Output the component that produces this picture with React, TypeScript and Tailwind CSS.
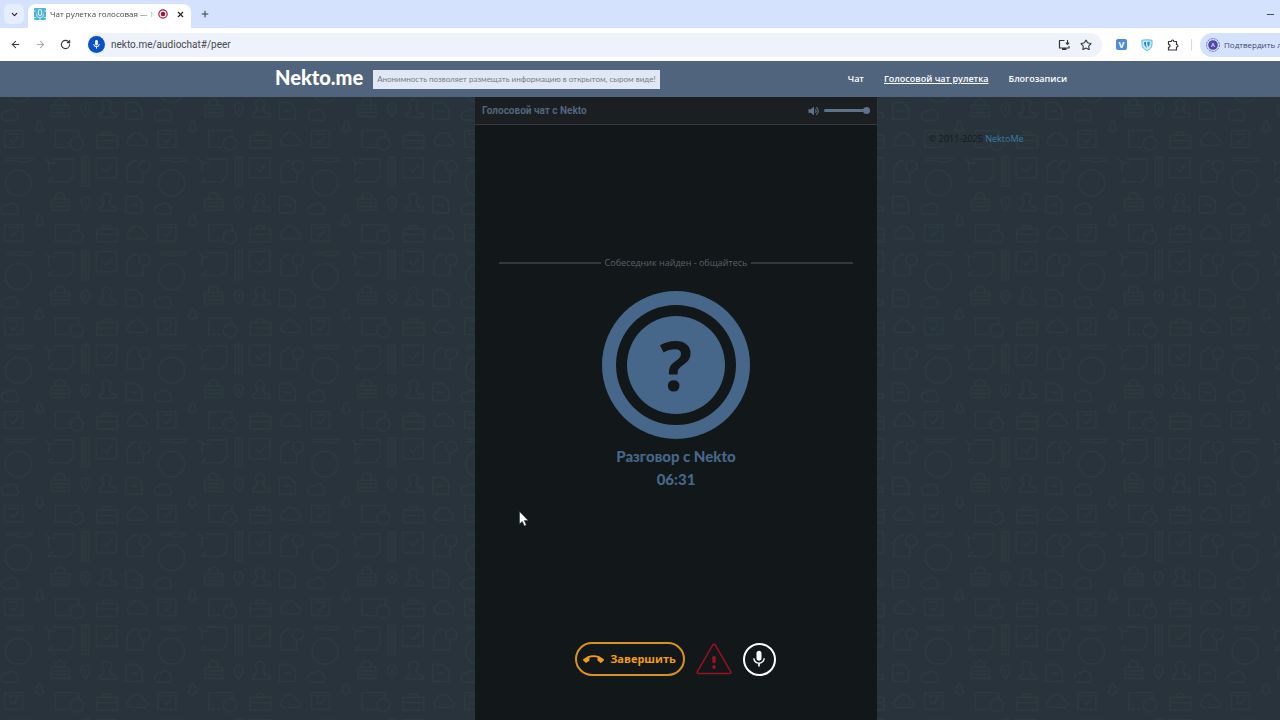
import React, { useState } from "react";
import {
  ArrowLeft,
  ArrowRight,
  ChevronDown,
  Minus,
  Plus,
  RotateCw,
  Star,
  X,
} from "lucide-react";
import { MdCallEnd, MdMic, MdOutlineMic } from "react-icons/md";

function TabStrip() {
  return (
    <div className="flex h-7 items-end bg-[#d5e2fd]">
      <div className="flex h-7 w-7 items-center pl-1">
        <button
          aria-label="Поиск вкладок"
          className="flex h-5 w-5 items-center justify-center rounded-md bg-[#e6eefe] text-[#1f1f1f]"
        >
          <ChevronDown size={9} strokeWidth={3} />
        </button>
      </div>
      <div className="flex h-6 w-[163px] items-center rounded-t-lg bg-white pr-0.5 pb-1 pl-1.5">
        <Favicon />
        <span className="ml-1 w-[104px] overflow-hidden bg-gradient-to-r from-[#3c4043] from-85% to-[#d0d2d4] bg-clip-text text-[8px] leading-4 whitespace-nowrap text-transparent">
          Чат рулетка голосовая — N
        </span>
        <svg viewBox="0 0 12 12" className="ml-1 h-2.5 w-2.5 shrink-0" aria-hidden="true">
          <circle cx="6" cy="6" r="5" fill="none" stroke="#a80f36" strokeWidth="1.4" />
          <circle cx="6" cy="6" r="2.7" fill="#a80f36" />
        </svg>
        <button aria-label="Закрыть вкладку" className="ml-auto p-1 text-[#1f1f1f]">
          <X size={9} strokeWidth={3} />
        </button>
      </div>
      <button
        aria-label="Новая вкладка"
        className="ml-1 flex h-7 w-5 items-center justify-center text-[#3c4043]"
      >
        <Plus size={10} strokeWidth={2.5} />
      </button>
      <button
        aria-label="Свернуть"
        className="mr-19 ml-auto flex h-7 w-3 items-center justify-center text-[#3c4043]"
      >
        <Minus size={11} />
      </button>
    </div>
  );
}

function Favicon() {
  return (
    <svg viewBox="0 0 12 12" className="h-3 w-3 shrink-0" aria-hidden="true">
      <rect width="12" height="12" rx="1" fill="#4fb3d3" />
      <rect x="4.4" y="1.5" width="3.2" height="6" rx="1.6" fill="none" stroke="#e8f6fb" strokeWidth="1" />
      <path d="M2.6 5.5v1a3.4 3.4 0 0 0 6.8 0v-1M6 9.6V12M0 3h1.6M10.4 3H12M0 9.5h2M10 9.5h2" fill="none" stroke="#e8f6fb" strokeWidth=".8" />
    </svg>
  );
}

function Toolbar() {
  return (
    <div className="flex h-[33px] items-center bg-white text-[#33363a]">
      <button aria-label="Назад" className="ml-2 p-0.5">
        <ArrowLeft size={11} strokeWidth={2.2} />
      </button>
      <button aria-label="Вперёд" className="ml-2.5 p-0.5 text-[#a3a6aa]">
        <ArrowRight size={11} strokeWidth={2.2} />
      </button>
      <button aria-label="Обновить" className="ml-2.5 p-0.5">
        <RotateCw size={11} strokeWidth={2.4} />
      </button>
      <div className="ml-[15px] flex h-6 flex-1 items-center rounded-full bg-[#eef2fb] pr-2">
        <span className="flex h-[17px] w-[17px] items-center justify-center rounded-full bg-[#0b50c8] text-white">
          <MdOutlineMic size={11} />
        </span>
        <input
          aria-label="Адресная строка"
          defaultValue="nekto.me/audiochat#/peer"
          className="ml-1.5 h-5 min-w-0 flex-1 bg-transparent font-[Roboto,sans-serif] text-[10px] text-[#46494d] outline-none"
        />
        <button aria-label="Установить приложение" className="p-0.5">
          <svg viewBox="0 0 12 12" className="h-3 w-3" aria-hidden="true">
            <path d="M6.500 1.500h-5v7.500h9.500V7" fill="none" stroke="currentColor" strokeWidth="1.200" strokeLinejoin="round" />
            <path d="M9.500 1v4.200M7.800 3.700l1.700 1.700 1.700-1.700" fill="none" stroke="currentColor" strokeWidth="1.100" />
            <path d="M4 9h4.500v2H4z" fill="currentColor" />
          </svg>
        </button>
        <button aria-label="В закладки" className="ml-1.5 p-0.5">
          <Star size={12} strokeWidth={2.2} />
        </button>
      </div>
      <button
        aria-label="Расширение V"
        className="ml-3.5 flex h-[11px] w-[11px] items-center justify-center rounded-xs bg-[#4d8be0] text-[9px] leading-none font-bold text-white"
      >
        V
      </button>
      <button aria-label="Расширение щит" className="ml-3.5">
        <svg viewBox="0 0 12 12" className="h-3 w-3" aria-hidden="true">
          <path d="M1 1.200 6 .8l5 .4v4C11 8.400 9 10.400 6 11.600 3 10.400 1 8.400 1 5.200z" fill="#c9edf8" stroke="#46aed8" strokeWidth=".9" />
          <path d="M3 3.200l2-.4v3.400L6.200 9C4.300 8 3 6 3 3.200zM6.200 2.800h2.600q.2 3-1.600 5.200L6.600 6z" fill="#1e88c9" />
        </svg>
      </button>
      <button aria-label="Расширения" className="ml-3 p-0.5">
        <svg viewBox="0 0 12 12" className="h-3 w-3" aria-hidden="true">
          <path
            d="M1.500 2.500h2.700q.1-1.500 1.300-1.500t1.300 1.500h2.700v3q1.500.1 1.500 1.300T9.500 8.100v2.900h-8V8.300q1.600-.2 1.600-1.500T1.500 5.300z"
            fill="none"
            stroke="currentColor"
            strokeWidth="1.200"
            strokeLinejoin="round"
          />
        </svg>
      </button>
      <span className="ml-2.5 h-3 w-px bg-[#cfdcf6]" />
      <button className="ml-2 flex h-6 w-[152px] shrink-0 items-center rounded-full bg-[#d5e2fd] pl-1.5 text-[8px] whitespace-nowrap text-[#3c4a68]">
        <svg viewBox="0 0 14 14" className="mr-1 h-3.5 w-3.5 shrink-0" aria-hidden="true">
          <circle cx="7" cy="7" r="6.400" fill="none" stroke="#5d55b5" strokeWidth=".9" strokeDasharray="2 1" />
          <circle cx="7" cy="7" r="4.800" fill="#4e46a8" />
          <path d="M5.300 9 7 5l1.700 4M5.900 7.700h2.200" fill="none" stroke="#dad7f5" strokeWidth=".8" />
        </svg>
        Подтвердить личность
      </button>
    </div>
  );
}

function SiteHeader() {
  return (
    <header className="h-9 bg-[#50657d]">
      <div className="mx-auto flex h-full max-w-[802px] items-center">
        <a href="#/" className="pb-1 font-[Lato,sans-serif] text-[20px] leading-none font-black text-white">
          Nekto.me
        </a>
        <p className="ml-2.5 bg-[#dfe8f4] px-1 font-[Lato,sans-serif] text-[8px] leading-[19px] whitespace-nowrap text-[#757c86]">
          Анонимность позволяет размещать информацию в открытом, сыром виде!
        </p>
        <nav className="mr-2.5 ml-auto flex gap-5 text-[9px] font-semibold whitespace-nowrap text-white">
          <a href="#/chat">Чат</a>
          <a href="#/peer" className="underline">
            Голосовой чат рулетка
          </a>
          <a href="#/blog">Блогозаписи</a>
        </nav>
      </div>
    </header>
  );
}

function Wallpaper() {
  return (
    <svg className="absolute inset-0 h-full w-full" aria-hidden="true">
      <defs>
        <pattern
          id="doodles"
          width="460"
          height="281"
          patternUnits="userSpaceOnUse"
          patternTransform="translate(0 58) scale(0.33333)"
        >
          <g fill="none" stroke="#2d3b40" strokeWidth="4" strokeLinejoin="round">
            <path d="M18 10h84M18 17h30q14 9 50-1" />
            <circle cx="55" cy="84" r="39" />
            <path d="M134 10l18 18M160 12h60v52l-14 16h-62l14-14M146 52V24h22" />
            <rect x="246" y="6" width="20" height="88" />
            <path d="M256 6v84" />
            <rect x="288" y="8" width="62" height="60" />
            <path d="M308 40l12 10 16-22" />
            <path d="M412 18h-14l-16 18v44h48V52" />
            <circle cx="434" cy="34" r="17" />
            <path d="M14 177a14 14 0 0 1 8-27 17 17 0 0 1 30 12 9 9 0 0 1-2 15z" />
            <rect x="154" y="132" width="54" height="34" />
            <path d="M166 132v-12q14-16 28 0v12M160 143h42M160 154h42" />
            <path d="M256 166c-22-24-12-40 0-40s22 16 0 40zM256 136v16" />
            <path d="M298 168h52v-12h-14l-8-16a14 14 0 1 0-16 0l-6 16h-8z" />
            <path d="M378 124h32l16 18v32h-48zM390 150h24" />
            <path d="M104 208q8-10 8-22 6-14 12 0 0 12 8 22zM112 214h10" />
            <rect x="14" y="208" width="54" height="50" />
            <path d="M30 236l10 8 16-20M24 218h34" />
            <path d="M206 258h-40v-50h70v20" />
            <circle cx="230" cy="246" r="20" />
            <rect x="290" y="222" width="62" height="38" />
            <path d="M310 222v-10h22v10M290 238h62" />
            <path d="M390 252a14 14 0 0 1 2-26 20 20 0 0 1 38 4 13 13 0 0 1 8 22z" />
          </g>
        </pattern>
      </defs>
      <rect width="100%" height="100%" fill="url(#doodles)" />
    </svg>
  );
}

function Badge() {
  return (
    <div className="mt-5 flex h-[148px] w-[148px] items-center justify-center rounded-full bg-[#466789]">
      <div className="flex h-[120px] w-[120px] items-center justify-center rounded-full bg-[#121719]">
        <div className="flex h-[98px] w-[98px] items-center justify-center rounded-full bg-[#466789] text-[68px] leading-none font-bold text-[#121719]">
          ?
        </div>
      </div>
    </div>
  );
}

function ChatPanel() {
  const [volume, setVolume] = useState(100);
  return (
    <section className="relative flex w-[402px] shrink-0 flex-col bg-[#121719]">
      <div className="flex h-7 items-center border-b border-[#353b40] bg-[#1b1f22] px-[7px]">
        <h1 className="font-[Roboto,sans-serif] text-[10px] font-bold text-[#51667e]">Голосовой чат с Nekto</h1>
        <label className="ml-auto flex items-center gap-1">
          <svg viewBox="0 0 14 12" className="h-3 w-3" role="img" aria-label="Громкость">
            <path d="M.5 4h2.500l4-3v10l-4-3H.5z" fill="#5c7389" />
            <path d="M8.500 4q2 2 0 4M9.500 1.500q5 4.500 0 9" fill="none" stroke="#5c7389" strokeWidth="1.200" />
          </svg>
          <input
            type="range"
            min={0}
            max={100}
            value={volume}
            onChange={(e) => setVolume(Number(e.target.value))}
            className="h-2 w-[46px] appearance-none bg-transparent [&::-webkit-slider-runnable-track]:h-[3px] [&::-webkit-slider-runnable-track]:rounded-full [&::-webkit-slider-runnable-track]:bg-[#5c7389] [&::-webkit-slider-thumb]:-mt-0.5 [&::-webkit-slider-thumb]:h-[7px] [&::-webkit-slider-thumb]:w-[7px] [&::-webkit-slider-thumb]:appearance-none [&::-webkit-slider-thumb]:rounded-full [&::-webkit-slider-thumb]:bg-[#5c7389]"
          />
        </label>
      </div>

      <div className="flex flex-1 flex-col items-center px-6 pt-[130px]">
        <div className="flex w-full items-center gap-1 text-[9px] leading-4 text-[#5b6065]">
          <span className="h-0.5 flex-1 bg-[#34393c]" />
          Собеседник найден - общайтесь
          <span className="h-0.5 flex-1 bg-[#34393c]" />
        </div>
        <Badge />
        <p className="mt-1.5 text-center font-[Lato,sans-serif] text-[15px] leading-[23px] font-black text-[#466789]">
          Разговор с Nekto
          <br />
          06:31
        </p>
      </div>

      <div className="flex items-center justify-center gap-[11px] pr-0.5 pb-11">
        <button className="flex h-[34px] w-[110px] items-center justify-center gap-1.5 rounded-full border-2 border-[#d8921f] text-[11px] font-bold text-[#f39c1b]">
          <MdCallEnd size={21} />
          Завершить
        </button>
        <button aria-label="Пожаловаться">
          <svg viewBox="0 0 36 32" className="h-8 w-9" aria-hidden="true">
            <path d="M16.700 2.200q1.300-2 2.600 0L34.700 28.600q.8 2-1.400 2H2.700q-2.200 0-1.400-2z" fill="none" stroke="#9b1024" strokeWidth="1.500" strokeLinejoin="round" />
            <path d="M18 14.500v4" stroke="#9b1024" strokeWidth="3.600" strokeLinecap="round" />
            <circle cx="18" cy="24" r="1.900" fill="#9b1024" />
          </svg>
        </button>
        <button
          aria-label="Микрофон"
          className="flex h-[33px] w-[33px] items-center justify-center rounded-full border-2 border-white text-white"
        >
          <MdMic size={20} />
        </button>
      </div>

      <svg viewBox="0 0 10 16" className="absolute top-[414px] left-11 h-4 w-2.5" aria-hidden="true">
        <path d="M.5.500v12.500l2.800-2.600 2 4.600 2-.9-2-4.500h3.900z" fill="#fff" stroke="#222" strokeWidth=".5" />
      </svg>
    </section>
  );
}

export default function App() {
  return (
    <div className="overflow-hidden font-['Open_Sans',sans-serif]">
      <div className="flex min-h-screen w-[calc(100%+72px)] flex-col">
        <TabStrip />
        <Toolbar />
        <SiteHeader />
        <main className="relative grid flex-1 grid-cols-[1fr_auto_1fr] bg-[#28333b]">
          <Wallpaper />
          <div />
          <ChatPanel />
          <footer className="relative pt-[34px] pl-[52px] text-[9px] leading-4 text-[#14191d]">
            © 2011-2025{" "}
            <a href="#/" className="text-[#3a7ca8]">
              NektoMe
            </a>
          </footer>
        </main>
      </div>
    </div>
  );
}
